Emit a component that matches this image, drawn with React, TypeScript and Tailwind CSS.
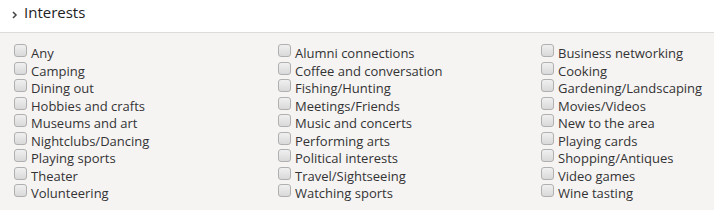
const interests = [
  'Any', 'Alumni connections', 'Business networking',
  'Camping', 'Coffee and conversation', 'Cooking',
  'Dining out', 'Fishing/Hunting', 'Gardening/Landscaping',
  'Hobbies and crafts', 'Meetings/Friends', 'Movies/Videos',
  'Museums and art', 'Music and concerts', 'New to the area',
  'Nightclubs/Dancing', 'Performing arts', 'Playing cards',
  'Playing sports', 'Political interests', 'Shopping/Antiques',
  'Theater', 'Travel/Sightseeing', 'Video games',
  'Volunteering', 'Watching sports', 'Wine tasting',
]

function Checkbox() {
  return (
    <span className="-mt-[1px] h-[13px] w-[13px] shrink-0 rounded-[3px] border border-[#b0b0b0] bg-gradient-to-b from-[#f0f0f0] to-[#d9d9d9]" />
  )
}

export default function App() {
  return (
    <div className="w-[714px] h-[210px] overflow-hidden bg-[#f6f4f3] font-['Open_Sans',sans-serif] text-[#333]">
      {/* Section header */}
      <div className="flex h-[33px] items-start gap-[6px] border-b border-[#dcdcdc] bg-white pl-[12px] pt-[1px]">
        <svg width="6" height="8" viewBox="0 0 6 8" className="mt-[10px]">
          <path d="M1 1l3 3-3 3" fill="none" stroke="#444" strokeWidth="1.5" />
        </svg>
        <span className="text-[15px] leading-[22.5px] text-[#222]">Interests</span>
      </div>

      {/* Options */}
      <div className="grid grid-cols-[264px_263px_1fr] pl-[14px] pt-[12px]">
        {interests.map((name) => (
          <label key={name} className="flex items-start gap-[4px] text-[13px] leading-[17.5px]">
            <Checkbox />
            <span>{name}</span>
          </label>
        ))}
      </div>
    </div>
  )
}
